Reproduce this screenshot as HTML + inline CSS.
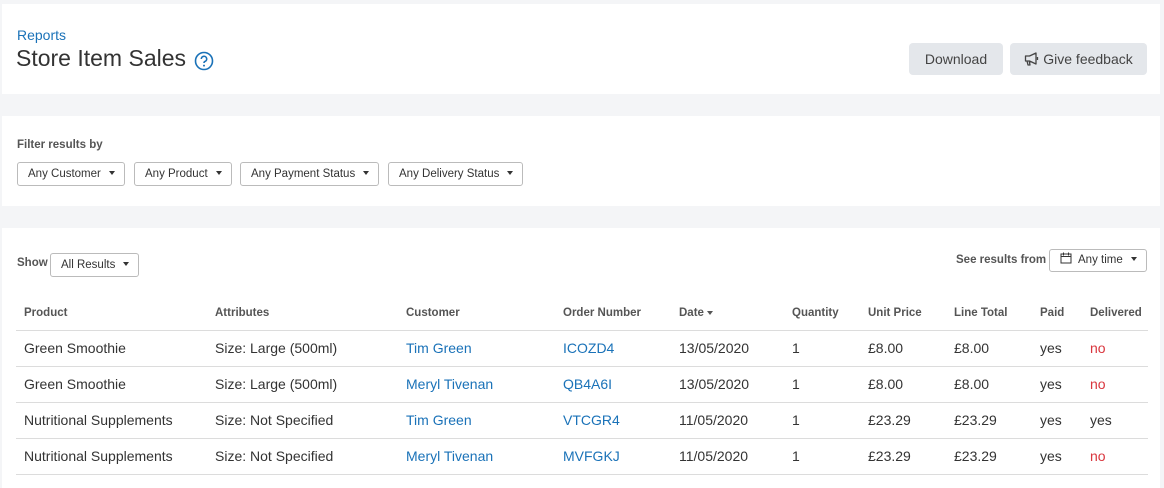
<!DOCTYPE html>
<html><head><style>
*{box-sizing:border-box;margin:0;padding:0}
body{width:1164px;height:480px;overflow:hidden;background:#f4f5f7;font-family:"Liberation Sans",Arial,sans-serif;color:#333;position:relative}
.p{position:absolute;left:2px;width:1158px;background:#fff}
.a{position:absolute;white-space:nowrap}
.btn{position:absolute;background:#e4e7eb;border-radius:4px;font-size:14px;color:#444;text-align:center;line-height:32px;height:32px}
.dd{position:absolute;height:24px;border:1px solid #bbb;border-radius:3px;font-size:11.5px;line-height:22px;padding:0 9px 0 10px;color:#333;white-space:nowrap;background:#fff}
.dd::after{content:"";display:inline-block;margin-left:8px;vertical-align:2px;border-left:3.5px solid transparent;border-right:3.5px solid transparent;border-top:4px solid #333}
.lbl{font-size:11.5px;font-weight:bold;color:#555}
.hd{font-size:11.5px;font-weight:bold;color:#555;top:307px}
.line{position:absolute;left:16px;width:1132px;height:1px;background:#dcdcdc}
.c{position:absolute;font-size:14px;white-space:nowrap}
.b{color:#1a72b8}.r{color:#d9363e}
</style></head><body>
<div class="p" style="top:4px;height:90px"></div>
<div class="p" style="top:116px;height:90px"></div>
<div class="p" style="top:228px;height:260px"></div>

<div class="a b" style="left:17px;top:27px;font-size:14px">Reports</div>
<div class="a" style="left:16px;top:45px;font-size:23px;color:#333">Store Item Sales</div>
<svg class="a" style="left:194px;top:51px" width="20" height="20" viewBox="0 0 20 20"><circle cx="10" cy="10" r="8.5" fill="none" stroke="#1a72b8" stroke-width="1.6"/><path d="M7.3 8a2.7 2.7 0 1 1 3.6 2.5c-.7.3-.9.8-.9 1.5" fill="none" stroke="#1a72b8" stroke-width="1.6"/><circle cx="10" cy="14.6" r="1" fill="#1a72b8"/></svg>
<div class="btn" style="left:909px;top:43px;width:94px">Download</div>
<div class="btn" style="left:1010px;top:43px;width:137px"><svg width="16" height="14" viewBox="0 0 16 14" style="vertical-align:-2px;margin-right:3px"><path d="M1.5 4h4L12 1v11L5.5 9h-4z M3 9l1 4h2l-.8-4 M13.5 5v3" fill="none" stroke="#444" stroke-width="1.3" stroke-linejoin="round"/></svg>Give feedback</div>

<div class="a lbl" style="left:17px;top:139px">Filter results by</div>
<div class="dd" style="left:17px;top:162px">Any Customer</div>
<div class="dd" style="left:134px;top:162px">Any Product</div>
<div class="dd" style="left:240px;top:162px">Any Payment Status</div>
<div class="dd" style="left:388px;top:162px">Any Delivery Status</div>

<div class="a lbl" style="left:17px;top:257px">Show</div>
<div class="dd" style="left:50px;top:253px">All Results</div>
<div class="a lbl" style="left:956px;top:254px">See results from</div>
<div class="dd" style="left:1049px;top:249px;height:23px;line-height:21px;width:98px"><svg width="12" height="12" viewBox="0 0 12 12" style="vertical-align:-1px;margin-right:6px"><rect x="1" y="2" width="10" height="9" fill="none" stroke="#333"/><path d="M1 4.5h10M3.5 0.5v3M8.5 0.5v3" stroke="#333"/></svg>Any time</div>

<div class="a hd" style="left:24px">Product</div>
<div class="a hd" style="left:215px">Attributes</div>
<div class="a hd" style="left:406px">Customer</div>
<div class="a hd" style="left:563px">Order Number</div>
<div class="a hd" style="left:679px">Date <span style="display:inline-block;border-left:3.5px solid transparent;border-right:3.5px solid transparent;border-top:4px solid #555;vertical-align:1px"></span></div>
<div class="a hd" style="left:792px">Quantity</div>
<div class="a hd" style="left:868px">Unit Price</div>
<div class="a hd" style="left:954px">Line Total</div>
<div class="a hd" style="left:1040px">Paid</div>
<div class="a hd" style="left:1090px">Delivered</div>

<div class="line" style="top:330px"></div>
<div class="line" style="top:366px"></div>
<div class="line" style="top:402px"></div>
<div class="line" style="top:438px"></div>
<div class="line" style="top:474px"></div>

<div style="position:absolute;top:340px;left:0">
<div class="c" style="left:24px">Green Smoothie</div><div class="c" style="left:215px">Size: Large (500ml)</div><div class="c b" style="left:406px">Tim Green</div><div class="c b" style="left:563px">ICOZD4</div><div class="c" style="left:679px">13/05/2020</div><div class="c" style="left:792px">1</div><div class="c" style="left:868px">£8.00</div><div class="c" style="left:954px">£8.00</div><div class="c" style="left:1040px">yes</div><div class="c r" style="left:1090px">no</div>
</div>
<div style="position:absolute;top:376px;left:0">
<div class="c" style="left:24px">Green Smoothie</div><div class="c" style="left:215px">Size: Large (500ml)</div><div class="c b" style="left:406px">Meryl Tivenan</div><div class="c b" style="left:563px">QB4A6I</div><div class="c" style="left:679px">13/05/2020</div><div class="c" style="left:792px">1</div><div class="c" style="left:868px">£8.00</div><div class="c" style="left:954px">£8.00</div><div class="c" style="left:1040px">yes</div><div class="c r" style="left:1090px">no</div>
</div>
<div style="position:absolute;top:412px;left:0">
<div class="c" style="left:24px">Nutritional Supplements</div><div class="c" style="left:215px">Size: Not Specified</div><div class="c b" style="left:406px">Tim Green</div><div class="c b" style="left:563px">VTCGR4</div><div class="c" style="left:679px">11/05/2020</div><div class="c" style="left:792px">1</div><div class="c" style="left:868px">£23.29</div><div class="c" style="left:954px">£23.29</div><div class="c" style="left:1040px">yes</div><div class="c" style="left:1090px">yes</div>
</div>
<div style="position:absolute;top:448px;left:0">
<div class="c" style="left:24px">Nutritional Supplements</div><div class="c" style="left:215px">Size: Not Specified</div><div class="c b" style="left:406px">Meryl Tivenan</div><div class="c b" style="left:563px">MVFGKJ</div><div class="c" style="left:679px">11/05/2020</div><div class="c" style="left:792px">1</div><div class="c" style="left:868px">£23.29</div><div class="c" style="left:954px">£23.29</div><div class="c" style="left:1040px">yes</div><div class="c r" style="left:1090px">no</div>
</div>
</body></html>
